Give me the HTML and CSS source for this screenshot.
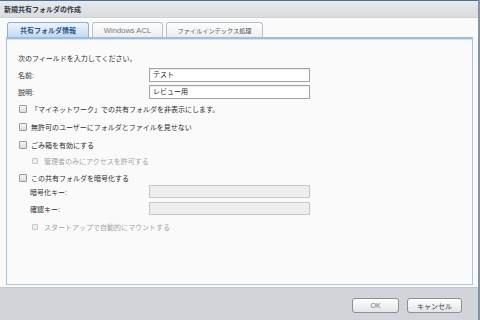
FILE: index.html
```html
<!DOCTYPE html>
<html lang="ja">
<head>
  <meta charset="UTF-8" />
  <title>新規共有フォルダの作成</title>
  <link rel="stylesheet" href="styles.css">
</head>
<body>
  <div class="dialog">
    <div class="title-bar">新規共有フォルダの作成</div>

    <div class="dialog-body">
      <div class="tabs">
        <div class="tab active">共有フォルダ情報</div>
        <div class="tab tab-acl">Windows ACL</div>
        <div class="tab tab-index">ファイルインデックス処理</div>
      </div>

      <div class="panel">
        <div class="intro">次のフィールドを入力してください。</div>

        <div class="field-row row-name">
          <span class="field-label">名前:</span>
          <div class="text-input">テスト</div>
        </div>
        <div class="field-row row-desc">
          <span class="field-label">説明:</span>
          <div class="text-input">レビュー用</div>
        </div>

        <label class="check-row row-cb1"><span class="checkbox"></span>「マイネットワーク」での共有フォルダを非表示にします。</label>
        <label class="check-row row-cb2"><span class="checkbox"></span>無許可のユーザーにフォルダとファイルを見せない</label>
        <label class="check-row row-cb3"><span class="checkbox"></span>ごみ箱を有効にする</label>
        <label class="check-row sub disabled row-cb3a"><span class="checkbox"></span>管理者のみにアクセスを許可する</label>
        <label class="check-row row-cb4"><span class="checkbox"></span>この共有フォルダを暗号化する</label>

        <div class="field-row sub row-key">
          <span class="field-label">暗号化キー:</span>
          <div class="text-input disabled"></div>
        </div>
        <div class="field-row sub row-confirm">
          <span class="field-label">確認キー:</span>
          <div class="text-input disabled"></div>
        </div>

        <label class="check-row sub disabled row-cb5"><span class="checkbox"></span>スタートアップで自動的にマウントする</label>
      </div>
    </div>

    <div class="footer">
      <button class="btn btn-ok">OK</button>
      <button class="btn btn-cancel">キャンセル</button>
    </div>
  </div>
</body>
</html>
```

FILE: styles.css
```css
* {
  box-sizing: border-box;
}
html, body {
  margin: 0;
  height: 100%;
}
body {
  font-family: 'Liberation Sans', 'Noto Sans CJK JP', sans-serif;
  font-size: 7px;
  color: #2e2e2e;
  background: #8793a2;
}
.dialog {
  width: 478px;
  height: 320px;
  display: flex;
  flex-direction: column;
  background: #fafafa;
  border-top: 1px solid #4d6f96;
}

/* title */
.title-bar {
  height: 17px;
  flex: none;
  display: flex;
  align-items: center;
  padding-left: 4px;
  font-weight: bold;
  color: #33383e;
  background: linear-gradient(#e7e9eb, #d9dde0);
  border-bottom: 1px solid #cfd3d7;
}

/* tabs + panel */
.dialog-body {
  flex: 1;
  padding: 4px 5px 2px 6px;
  display: flex;
  flex-direction: column;
}
.tabs {
  display: flex;
  gap: 3px;
  padding-left: 1px;
  height: 15px;
  flex: none;
}
.tab {
  height: 15px;
  display: flex;
  align-items: center;
  justify-content: center;
  border: 1px solid #b7bec6;
  border-bottom: none;
  border-radius: 3px 3px 0 0;
  background: linear-gradient(#fdfdfd, #eceef0);
  color: #555;
  font-weight: normal;
}
.tab.active {
  width: 82px;
  font-weight: bold;
  color: #2a5a8a;
  border-color: #8fb1d2;
  background: linear-gradient(#eef5fb, #c4daef);
}
.tab-acl {
  width: 71px;
  font-size: 7.6px;
  color: #7a7a7a;
}
.tab-index {
  width: 97px;
  font-size: 6.2px;
}
.panel {
  flex: 1;
  border: 1px solid #a9c5df;
  border-top: 2px solid #9dbedc;
  box-shadow: inset 0 1px 0 #d5e4f1;
  background: #fafafa;
  padding: 14px 0 0 11px;
  display: flex;
  flex-direction: column;
}

/* rows */
.intro {
  height: 12px;
  line-height: 12px;
}
.field-row {
  display: flex;
  align-items: center;
  height: 14px;
  margin-top: 3px;
}
.field-label {
  width: 131px;
  flex: none;
}
.field-row.sub .field-label {
  padding-left: 12px;
}
.text-input {
  width: 161px;
  height: 14px;
  border: 1px solid #a3a3a3;
  background: #fff;
  box-shadow: inset 0 1px 1px rgba(0,0,0,0.08);
  padding-left: 3px;
  line-height: 12px;
  color: #222;
}
.text-input.disabled {
  background: #eeeeee;
  border-color: #c6c6c6;
  box-shadow: none;
  height: 13px;
}
.row-key, .row-confirm {
  height: 13px;
}
.row-key { margin-top: 1px; }
.row-confirm { margin-top: 4px; }

.check-row {
  display: flex;
  align-items: center;
  height: 12px;
  padding-left: 1px;
}
.checkbox {
  width: 8px;
  height: 8px;
  flex: none;
  margin-right: 4px;
  border: 1px solid #9a9a9a;
  border-radius: 1px;
  background: linear-gradient(#f6f6f6, #dcdcdc);
}
.check-row.sub {
  padding-left: 14px;
}
.check-row.sub .checkbox {
  width: 6px;
  height: 6px;
  margin-right: 6px;
}
.check-row.disabled {
  color: #a5a5a5;
}
.check-row.disabled .checkbox {
  border-color: #c8c8c8;
  background: #efefef;
}
.row-cb1 { margin-top: 4px; }
.row-cb2 { margin-top: 6px; }
.row-cb3 { margin-top: 6px; }
.row-cb3a { margin-top: 4px; }
.row-cb4 { margin-top: 5px; }
.row-cb5 { margin-top: 6px; }

/* footer */
.footer {
  height: 33px;
  flex: none;
  background: #d1d5d9;
  border-top: 1px solid #c3c8cd;
  display: flex;
  justify-content: flex-end;
  align-items: flex-start;
  gap: 8px;
  padding: 10px 16px 0 0;
}
.btn {
  height: 15px;
  padding: 0;
  font-family: inherit;
  font-size: 7px;
  border: 1px solid #8b9096;
  border-radius: 3px;
  background: linear-gradient(#fefefe, #e3e5e7);
  color: #444;
}
.btn-ok {
  width: 47px;
  color: #777;
}
.btn-cancel {
  width: 55px;
}
```
